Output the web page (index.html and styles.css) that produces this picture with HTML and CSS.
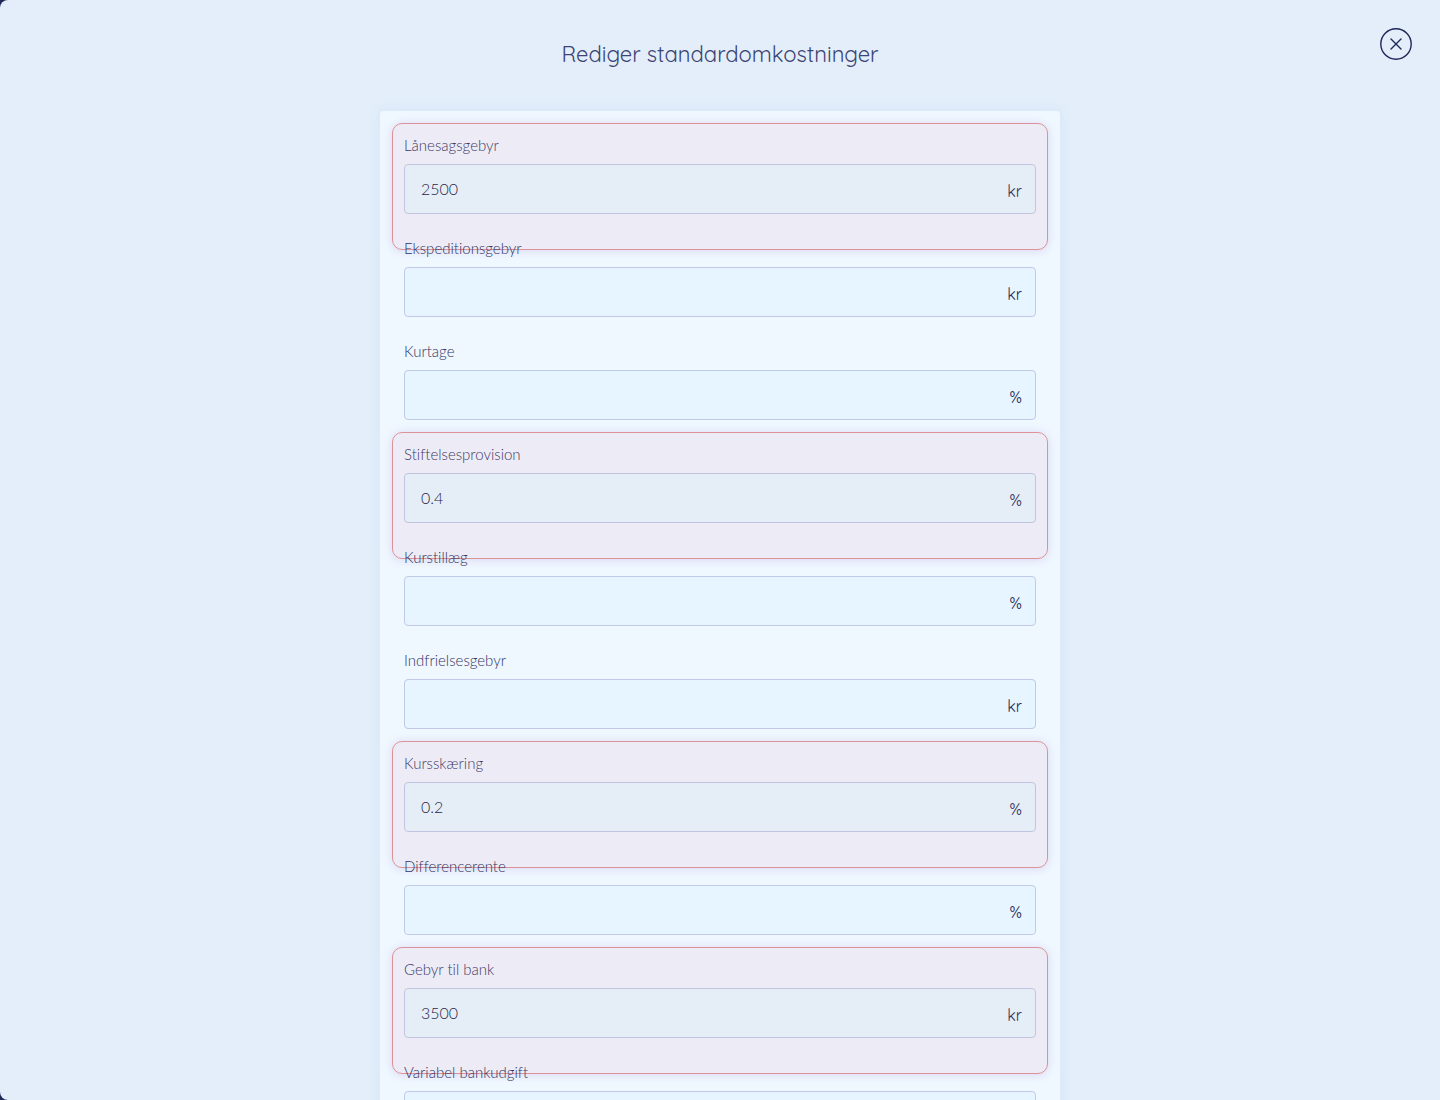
FILE: index.html
```html
<!doctype html>
<html lang="da">
<head>
  <meta charset="UTF-8">
  <title>Rediger standardomkostninger</title>
  <link rel="stylesheet" href="styles.css">
</head>

<body>

  <div class="modal">

    <header class="modalHeader">
      <h1>Rediger standardomkostninger</h1>
      <button type="button" class="closeButton" aria-label="Luk">
        <svg width="32" height="32" viewBox="0 0 32 32" fill="none" stroke="currentColor" stroke-width="1.4" stroke-linecap="round">
          <circle cx="16" cy="16" r="15.2"/>
          <path d="M11 11 L21 21 M21 11 L11 21"/>
        </svg>
      </button>
    </header>

    <form class="panel">
      <div class="field changed">
        <label for="laanesagsgebyr">Lånesagsgebyr</label>
        <div class="inputBox">
          <input type="text" id="laanesagsgebyr" value="2500">
          <span class="unit">kr</span>
        </div>
      </div>

      <div class="field">
        <label for="ekspeditionsgebyr">Ekspeditionsgebyr</label>
        <div class="inputBox">
          <input type="text" id="ekspeditionsgebyr">
          <span class="unit">kr</span>
        </div>
      </div>

      <div class="field">
        <label for="kurtage">Kurtage</label>
        <div class="inputBox">
          <input type="text" id="kurtage">
          <span class="unit">%</span>
        </div>
      </div>

      <div class="field changed">
        <label for="stiftelsesprovision">Stiftelsesprovision</label>
        <div class="inputBox">
          <input type="text" id="stiftelsesprovision" value="0.4">
          <span class="unit">%</span>
        </div>
      </div>

      <div class="field">
        <label for="kurstillaeg">Kurstillæg</label>
        <div class="inputBox">
          <input type="text" id="kurstillaeg">
          <span class="unit">%</span>
        </div>
      </div>

      <div class="field">
        <label for="indfrielsesgebyr">Indfrielsesgebyr</label>
        <div class="inputBox">
          <input type="text" id="indfrielsesgebyr">
          <span class="unit">kr</span>
        </div>
      </div>

      <div class="field changed">
        <label for="kursskaering">Kursskæring</label>
        <div class="inputBox">
          <input type="text" id="kursskaering" value="0.2">
          <span class="unit">%</span>
        </div>
      </div>

      <div class="field">
        <label for="differencerente">Differencerente</label>
        <div class="inputBox">
          <input type="text" id="differencerente">
          <span class="unit">%</span>
        </div>
      </div>

      <div class="field changed">
        <label for="gebyrTilBank">Gebyr til bank</label>
        <div class="inputBox">
          <input type="text" id="gebyrTilBank" value="3500">
          <span class="unit">kr</span>
        </div>
      </div>

      <div class="field">
        <label for="variabelBankudgift">Variabel bankudgift</label>
        <div class="inputBox">
          <input type="text" id="variabelBankudgift">
        </div>
      </div>
    </form>

  </div>

</body>
</html>
```
FILE: styles.css
```css
html, body {
  height: 100%;
  margin: 0;
}

body {
  background-color: #1f2757;
  color: #1f2757;
  font-family: Lato, "Liberation Sans", sans-serif;
  font-size: 16px;
  font-weight: 300;
  font-variant-ligatures: none;
}

* {
  box-sizing: border-box;
}

.modal {
  height: 100%;
  overflow-y: auto;
  scrollbar-width: none;
  background-color: #e3eefa;
  border-radius: 8px 0 0 8px;
}

.modalHeader {
  position: relative;
  padding: 39px 72px 42px;
}

.modalHeader h1 {
  margin: 0;
  color: #3b4474;
  font-family: Quicksand, Lato, sans-serif;
  font-size: 22px;
  font-weight: 400;
  line-height: 30px;
  text-align: center;
}

.closeButton {
  position: absolute;
  top: 28px;
  right: 28px;
  width: 32px;
  height: 32px;
  padding: 0;
  border: 0;
  background: none;
  color: #1f2757;
  cursor: pointer;
}

.closeButton svg {
  display: block;
}

.panel {
  max-width: 680px;
  margin: 0 auto;
  padding: 24px;
  background-color: #eff7ff;
  border-radius: 4px;
  box-shadow: 0 0 12px rgba(190, 215, 245, 0.4);
}

.field {
  position: relative;
  padding-bottom: 24px;
}

.field label {
  display: block;
  margin-bottom: 8px;
  color: #33345f;
  font-size: 15px;
  line-height: 21px;
}

.inputBox {
  display: flex;
  align-items: center;
  height: 50px;
  padding: 0 13px 0 16px;
  background-color: #e6f5ff;
  border: 1px solid #c0cae6;
  border-radius: 4px;
}

.inputBox input {
  flex: 1;
  min-width: 0;
  padding: 0 0 2px;
  border: 0;
  outline: 0;
  background: none;
  color: #141a45;
  font: inherit;
}

.unit {
  padding-top: 4px;
  font-family: Quicksand, Lato, sans-serif;
  font-weight: 400;
  line-height: 16px;
}

.changed .inputBox {
  background-color: #e7f9ff;
}

/* red frame laid over a field that has a value, reaches into the next label */
.changed::after {
  content: "";
  position: absolute;
  inset: -12px;
  background-color: rgba(220, 120, 145, 0.08);
  border: 1px solid #dc9298;
  border-radius: 10px;
  box-shadow: 0 1px 8px rgba(190, 170, 220, 0.4);
  pointer-events: none;
}
```
